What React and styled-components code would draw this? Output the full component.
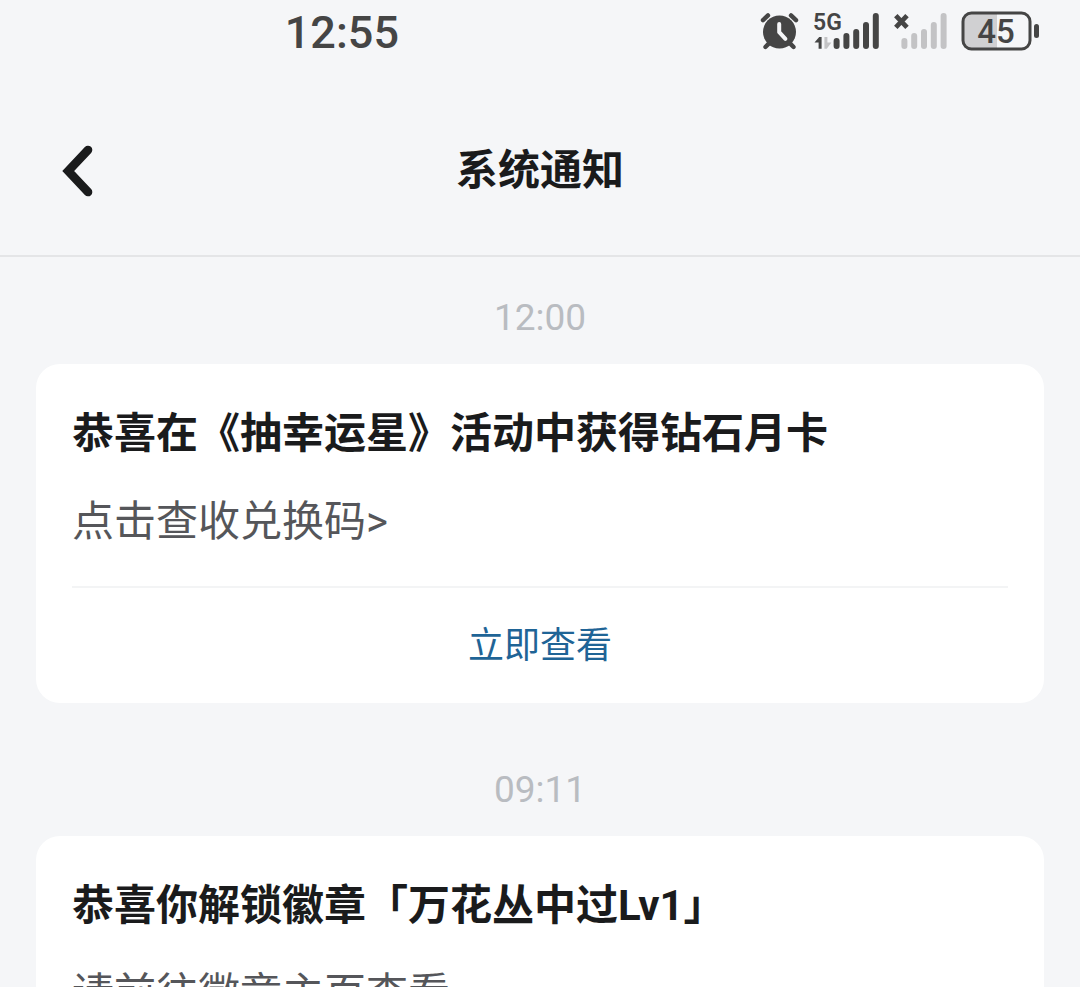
import React from "react";
//styling
import styled, { createGlobalStyle } from "styled-components";

//Data
const notices = [
    {
        id: 1,
        time: "12:00",
        title: "恭喜在《抽幸运星》活动中获得钻石月卡",
        body: "点击查收兑换码>",
        action: "立即查看",
    },
    {
        id: 2,
        time: "09:11",
        title: "恭喜你解锁徽章「万花丛中过Lv1」",
        body: "请前往徽章主页查看",
    },
];

const barTops = [26, 21, 17, 10, 1];

//icons
const AlarmIcon = () => (
    <svg width="40" height="38" viewBox="0 0 40 38" fill="none" strokeLinecap="round" role="img" aria-label="alarm">
        <circle cx="19.5" cy="20" r="16.5" fill="#454545" />
        <path d="M3 8.2L8 3.4M31 3.4L36 8.2" stroke="#454545" strokeWidth="4.4" />
        <path d="M5.4 35L9 31.4M33.6 35L30 31.4" stroke="#454545" strokeWidth="4.4" />
        <path d="M19.2 12V20.2L25.4 26.8" stroke="#f5f6f8" strokeWidth="4" strokeLinejoin="round" />
    </svg>
);

const Bars = ({ start, color }) =>
    barTops.map((top, i) => (
        <rect key={top} x={start + i * 9.8} y={top} width="6" height={37 - top} rx="3" fill={color} />
    ));

const SignalIcon = () => (
    <svg width="68" height="38" viewBox="0 0 68 38" role="img" aria-label="5G">
        <SignalText x="0" y="18">5G</SignalText>
        <path d="M1.5 30.5L6.2 25H8.6V36.8H5.6V30.5Z" fill="#454545" />
        <path d="M11.4 25H14.4V30.6H18.4L13.8 36.8H11.4Z" fill="#c3c3c5" />
        <Bars start={20.6} color="#454545" />
    </svg>
);

const NoSignalIcon = () => (
    <svg width="54" height="38" viewBox="0 0 54 38" role="img" aria-label="no signal">
        <path d="M1.8 3.6L13 15.4M13 3.6L1.8 15.4" stroke="#454545" strokeWidth="4.8" />
        <Bars start={7.4} color="#c3c3c5" />
    </svg>
);

const BatteryIcon = () => (
    <svg width="79" height="40" viewBox="0 0 79 40" role="img" aria-label="battery">
        <path d="M36 2.5H10.5Q3 2.5 3 10V30Q3 37.5 10.5 37.5H36Z" fill="#d0d0d2" />
        <rect x="2" y="2" width="67" height="36" rx="8.5" fill="none" stroke="#454545" strokeWidth="3" />
        <rect x="73" y="13" width="5" height="14" rx="2.5" fill="#454545" />
        <BatteryText x="35" y="32" textAnchor="middle">45</BatteryText>
    </svg>
);

const BackIcon = () => (
    <svg width="32" height="54" viewBox="0 0 32 54" fill="none">
        <path d="M27 6L7.2 27L27 48" stroke="#1a1b1c" strokeWidth="8.6" strokeLinecap="round" />
    </svg>
);

const Notice = ({ notice }) => (
    <Item>
        <Time>{notice.time}</Time>
        <Card>
            <CardTitle>{notice.title}</CardTitle>
            <CardBody>{notice.body}</CardBody>
            {notice.action && <CardLink href="#">{notice.action}</CardLink>}
        </Card>
    </Item>
);

const App = () => {
    return (
        <>
            <GlobalStyle />
            <Page>
                <StatusBar>
                    <Clock>12:55</Clock>
                    <StatusIcons>
                        <AlarmIcon />
                        <SignalIcon />
                        <NoSignalIcon />
                        <BatteryIcon />
                    </StatusIcons>
                </StatusBar>
                <Header>
                    <BackButton aria-label="返回">
                        <BackIcon />
                    </BackButton>
                    <h1>系统通知</h1>
                </Header>
                <List>
                    {notices.map((notice) => (
                        <Notice key={notice.id} notice={notice} />
                    ))}
                </List>
            </Page>
        </>
    );
};

const GlobalStyle = createGlobalStyle`
    *{
        box-sizing: border-box;
        margin: 0;
        padding: 0;
    }
    body{
        background: #f5f6f8;
        color: #1a1b1c;
        font-family: Roboto, "Noto Sans CJK SC", sans-serif;
    }
`;

const Page = styled.div`
    height: 100vh;
    display: flex;
    flex-direction: column;
`;

const StatusBar = styled.div`
    display: flex;
    align-items: center;
    justify-content: space-between;
    height: 62px;
    padding: 0 40px 0 26%;
    flex-shrink: 0;
`;

const Clock = styled.span`
    padding: 3px 0 0 4px;
    font-size: 45px;
    line-height: 59px;
    font-weight: 500;
    color: #454545;
`;

const StatusIcons = styled.div`
    display: flex;
    align-items: center;
    gap: 13px;
    svg{
        overflow: visible;
    }
`;

const SignalText = styled.text`
    font-family: Roboto, sans-serif;
    font-size: 23px;
    font-weight: 600;
    fill: #454545;
`;

const BatteryText = styled.text`
    font-family: Roboto, sans-serif;
    font-size: 33px;
    font-weight: 500;
    fill: #454545;
`;

const Header = styled.header`
    display: grid;
    grid-template-columns: 1fr auto 1fr;
    align-items: center;
    padding: 79px 61px 54px;
    border-bottom: 2px solid #e4e5e7;
    flex-shrink: 0;
    h1{
        font-size: 42px;
        line-height: 60px;
        font-weight: 700;
    }
`;

const BackButton = styled.button`
    display: flex;
    justify-self: start;
    border: none;
    background: none;
    cursor: pointer;
`;

const List = styled.ul`
    flex: 1;
    min-height: 0;
    overflow-y: auto;
    scrollbar-width: none;
    list-style: none;
    padding: 34px 36px;
`;

const Item = styled.li`
    margin-bottom: 60px;
`;

const Time = styled.p`
    margin-bottom: 19px;
    text-align: center;
    font-size: 37px;
    line-height: 54px;
    color: #b9bcc1;
`;

const Card = styled.article`
    background: white;
    border-radius: 24px;
    padding: 38px 36px 0;
`;

const CardTitle = styled.h2`
    font-size: 42px;
    line-height: 64px;
    font-weight: 700;
`;

const CardBody = styled.p`
    padding: 24px 0 32px;
    font-size: 42px;
    line-height: 64px;
    color: #55565a;
`;

const CardLink = styled.a`
    display: block;
    padding-top: 2px;
    border-top: 2px solid #f3f4f5;
    text-align: center;
    text-decoration: none;
    font-size: 36px;
    line-height: 113px;
    color: #1f6496;
`;

export default App;
